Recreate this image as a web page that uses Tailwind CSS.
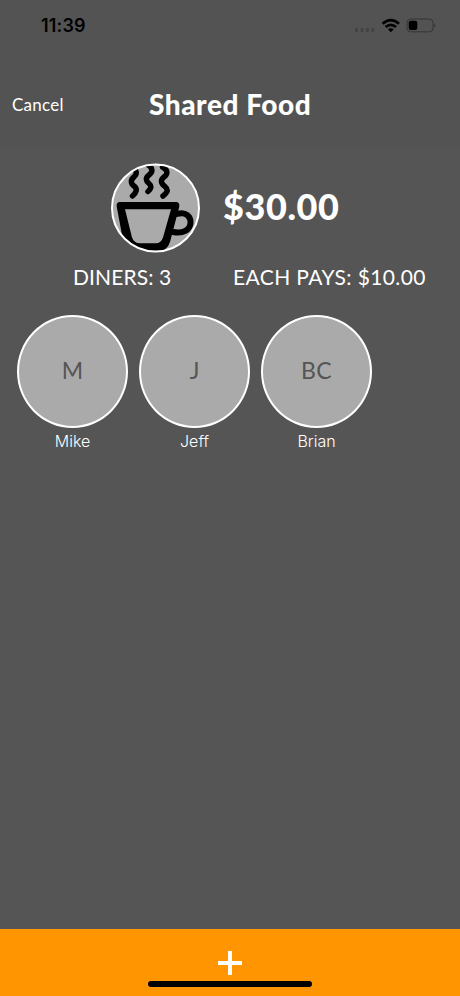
<!DOCTYPE html>
<html lang="en">
<head>
<meta charset="utf-8">
<title>Shared Food</title>
<script src="https://cdn.jsdelivr.net/npm/@tailwindcss/browser@4"></script>
</head>
<body class="bg-[#555555]">
<div class="flex h-[996px] w-[460px] flex-col overflow-hidden bg-[#555555] font-['Lato',sans-serif] text-white">
  <header class="h-[148px] shrink-0 bg-[#535353]">
    <div class="flex h-[51px] items-center justify-between pl-[41px] pr-[24px] text-black">
      <span class="font-['Inter',sans-serif] text-[18px] font-semibold leading-[51px] tracking-[0.150px]">11:39</span>
      <svg class="h-[20px] w-[84px]" viewBox="352 16 84 20" fill="none">
        <g fill="#434343"><rect x="355" y="28" width="3" height="4" rx="1"/><rect x="360.5" y="28" width="3" height="4" rx="1"/><rect x="366" y="28" width="3" height="4" rx="1"/><rect x="371.300" y="28" width="3" height="4" rx="1"/></g>
        <g stroke="#000" stroke-width="2.800"><path d="M382.600 23.700Q390.800 16.600 399 23.700"/><path d="M385.600 27Q390.800 22.700 396 27"/></g>
        <path d="M387.900 29.300Q390.800 27 393.700 29.300L390.800 32.200Z" fill="#000"/>
        <rect x="407" y="19" width="26" height="12.800" rx="3.600" stroke="#353535"/>
        <rect x="408.700" y="20.700" width="8.600" height="9.400" rx="2" fill="#000"/>
        <path d="M434.300 23.200Q436.400 25.400 434.300 27.600Z" fill="#303030"/>
      </svg>
    </div>
    <div class="grid h-[106px] grid-cols-[149px_162px_1fr] items-center">
      <span class="pl-[12px] pt-px text-[17px] tracking-[0.250px]">Cancel</span>
      <h1 class="whitespace-nowrap text-[28px] font-black tracking-[0.550px]">Shared Food</h1>
    </div>
  </header>
  <main class="flex-1 pt-[15px]">
    <section class="flex h-[90px] items-center pl-[111px]">
      <svg class="h-[90px] w-[90px] shrink-0" viewBox="111 163 90 90" fill="none" stroke="#000" stroke-linecap="round" stroke-linejoin="round">
        <defs><clipPath id="badge"><circle cx="155.500" cy="208" r="43.500"/></clipPath></defs>
        <circle cx="155.500" cy="208" r="43.500" fill="#aaaaaa" stroke="none"/>
        <g clip-path="url(#badge)">
          <path stroke-width="5.500" d="M132 167C137 170 137.500 174 134 177C130 180 131 184 134 186C138 189 136 193 132.500 196M148 165C153 168 153 172 149 175C145 178 146 181 149 183.500C152 186 151 189 148 191.500M162.500 167C168 170 168 174 164 177C160 180 161 184 165 186.500C169 190 167 193 163 196"/>
          <path fill="#000" stroke="none" fill-rule="evenodd" d="M119.500 202H176.500Q180 202.500 179.200 207L170 242Q167 252 156 252H141Q126 252 123.500 243L116.800 207Q116 202.500 119.500 202ZM125 209.300L132 237.500Q134 243.300 140 243.300H156Q161 243.300 163 237.500L171 209.300Z"/>
          <path stroke-width="6" d="M177 214C186 211 191 217 190.500 223C190 230 183 234 173 232"/>
        </g>
        <circle cx="155.500" cy="208" r="43.500" stroke="#fff" stroke-width="2"/>
      </svg>
      <div class="ml-[22px] whitespace-nowrap pb-[4px] text-[36px] font-black leading-[44px] tracking-[0.600px]">$30.00</div>
    </section>
    <section class="grid h-[47px] grid-cols-[233px_1fr] items-center whitespace-nowrap text-[21px]">
      <span class="pl-[73px] tracking-[0.100px]">DINERS: 3</span>
      <span class="tracking-[0.390px]">EACH PAYS: $10.00</span>
    </section>
    <section class="mt-[15px] flex gap-[11px] pl-[17px]">
      <div class="w-[111px] text-center">
        <div class="flex h-[113px] items-center justify-center rounded-[50%] border-2 border-white bg-[#aaaaaa] pb-[2px] text-[23px] text-[#555555]">M</div>
        <div class="h-[26px] font-['Inter',sans-serif] text-[16px] font-light leading-[26px]">Mike</div>
      </div>
      <div class="w-[111px] text-center">
        <div class="flex h-[113px] items-center justify-center rounded-[50%] border-2 border-white bg-[#aaaaaa] pb-[2px] text-[23px] text-[#555555]">J</div>
        <div class="h-[26px] font-['Inter',sans-serif] text-[16px] font-light leading-[26px]">Jeff</div>
      </div>
      <div class="w-[111px] text-center">
        <div class="flex h-[113px] items-center justify-center rounded-[50%] border-2 border-white bg-[#aaaaaa] pb-[2px] text-[23px] tracking-[0.500px] text-[#555555]">BC</div>
        <div class="h-[26px] font-['Inter',sans-serif] text-[16px] font-light leading-[26px]">Brian</div>
      </div>
    </section>
  </main>
  <footer class="flex h-[67px] shrink-0 flex-col items-center bg-[#ff9500] pt-[22px]">
    <svg class="h-[24px] w-[24px] shrink-0" viewBox="0 0 24 24"><path d="M12 0V24M0 12H24" stroke="#fff" stroke-width="4"/></svg>
    <div class="mt-[6px] h-[6px] w-[164px] rounded-full bg-black"></div>
  </footer>
</div>
</body>
</html>
